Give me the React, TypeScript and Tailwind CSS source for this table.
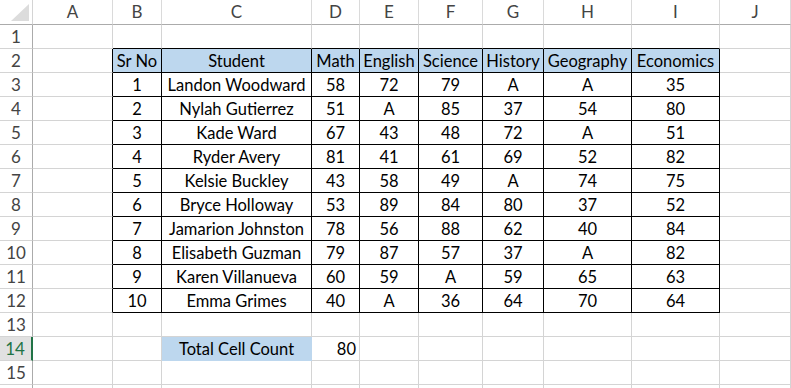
import React from "react";

const colKeys = ["A", "B", "C", "D", "E", "F", "G", "H", "I", "J"];

const students = [
  ["1", "Landon Woodward", "58", "72", "79", "A", "A", "35"],
  ["2", "Nylah Gutierrez", "51", "A", "85", "37", "54", "80"],
  ["3", "Kade Ward", "67", "43", "48", "72", "A", "51"],
  ["4", "Ryder Avery", "81", "41", "61", "69", "52", "82"],
  ["5", "Kelsie Buckley", "43", "58", "49", "A", "74", "75"],
  ["6", "Bryce Holloway", "53", "89", "84", "80", "37", "52"],
  ["7", "Jamarion Johnston", "78", "56", "88", "62", "40", "84"],
  ["8", "Elisabeth Guzman", "79", "87", "57", "37", "A", "82"],
  ["9", "Karen Villanueva", "60", "59", "A", "59", "65", "63"],
  ["10", "Emma Grimes", "40", "A", "36", "64", "70", "64"],
];

const header = ["Sr No", "Student", "Math", "English", "Science", "History", "Geography", "Economics"];

// value at (row 1..16, col 0..9)
function cellValue(r: number, c: number): string {
  if (r === 2 && c >= 1 && c <= 8) return header[c - 1];
  if (r >= 3 && r <= 12 && c >= 1 && c <= 8) return students[r - 3][c - 1];
  if (r === 14 && c === 2) return "Total Cell Count";
  if (r === 14 && c === 3) return "80";
  return "";
}

function Cell({ r, c }: { r: number; c: number }) {
  const inTable = r >= 2 && r <= 12 && c >= 1 && c <= 8;
  const leftEdge = c === 0 && r >= 2 && r <= 12;
  const topEdge = r === 1 && c >= 1 && c <= 8;
  const blue = (r === 2 && inTable) || (r === 14 && c === 2);
  const value = cellValue(r, c);
  const right = r === 14 && c === 3;

  return (
    <div
      className={`h-6 border-r border-b flex items-center overflow-visible whitespace-nowrap pt-[2px] ${
        inTable || leftEdge ? "border-r-black" : blue ? "border-r-[#bdd7ee]" : "border-r-[#d4d4d4]"
      } ${inTable || topEdge ? "border-b-black" : blue ? "border-b-[#bdd7ee]" : "border-b-[#d4d4d4]"} ${
        blue ? "bg-[#bdd7ee]" : "bg-white"
      } ${right ? "justify-end pr-[3px]" : "justify-center"}`}
    >
      {value}
    </div>
  );
}

export default function App() {
  const rows = Array.from({ length: 16 }, (_, i) => i + 1);

  return (
    <div className="w-[791px] h-[388px] overflow-hidden bg-white text-black font-['Lato',sans-serif] text-[16.5px]">
      <div className="grid grid-cols-[33px_80px_49px_150px_48px_59px_64px_61px_88px_88px_1fr]">
        {/* corner */}
        <div className="h-[25px] border-r border-b border-r-[#d4d4d4] border-b-[#ababab] bg-white flex items-end justify-end pr-[3px] pb-[3px]">
          <svg width="18" height="17" viewBox="0 0 18 17">
            <polygon points="18,0 18,17 0,17" fill="#dcdcdc" />
          </svg>
        </div>
        {colKeys.map((k) => (
          <div
            key={k}
            className="h-[25px] border-r border-b border-r-[#dadada] border-b-[#ababab] bg-white flex items-center justify-center text-[#444] text-[17px]"
          >
            {k}
          </div>
        ))}

        {rows.map((r) => (
          <React.Fragment key={r}>
            {r === 14 ? (
              <div className="h-6 border-r-2 border-b border-r-[#217346] border-b-[#d4d4d4] bg-[#e1e1e1] flex items-center justify-center text-[#217346] text-[17px] pt-[1px] pr-[1px]">
                {r}
              </div>
            ) : (
              <div className="h-6 border-r border-b border-r-[#ababab] border-b-[#d4d4d4] bg-white flex items-center justify-center text-[#444] text-[17px] pt-[1px]">
                {r <= 15 ? r : ""}
              </div>
            )}
            {colKeys.map((_, c) => (
              <Cell key={c} r={r} c={c} />
            ))}
          </React.Fragment>
        ))}
      </div>
    </div>
  );
}
